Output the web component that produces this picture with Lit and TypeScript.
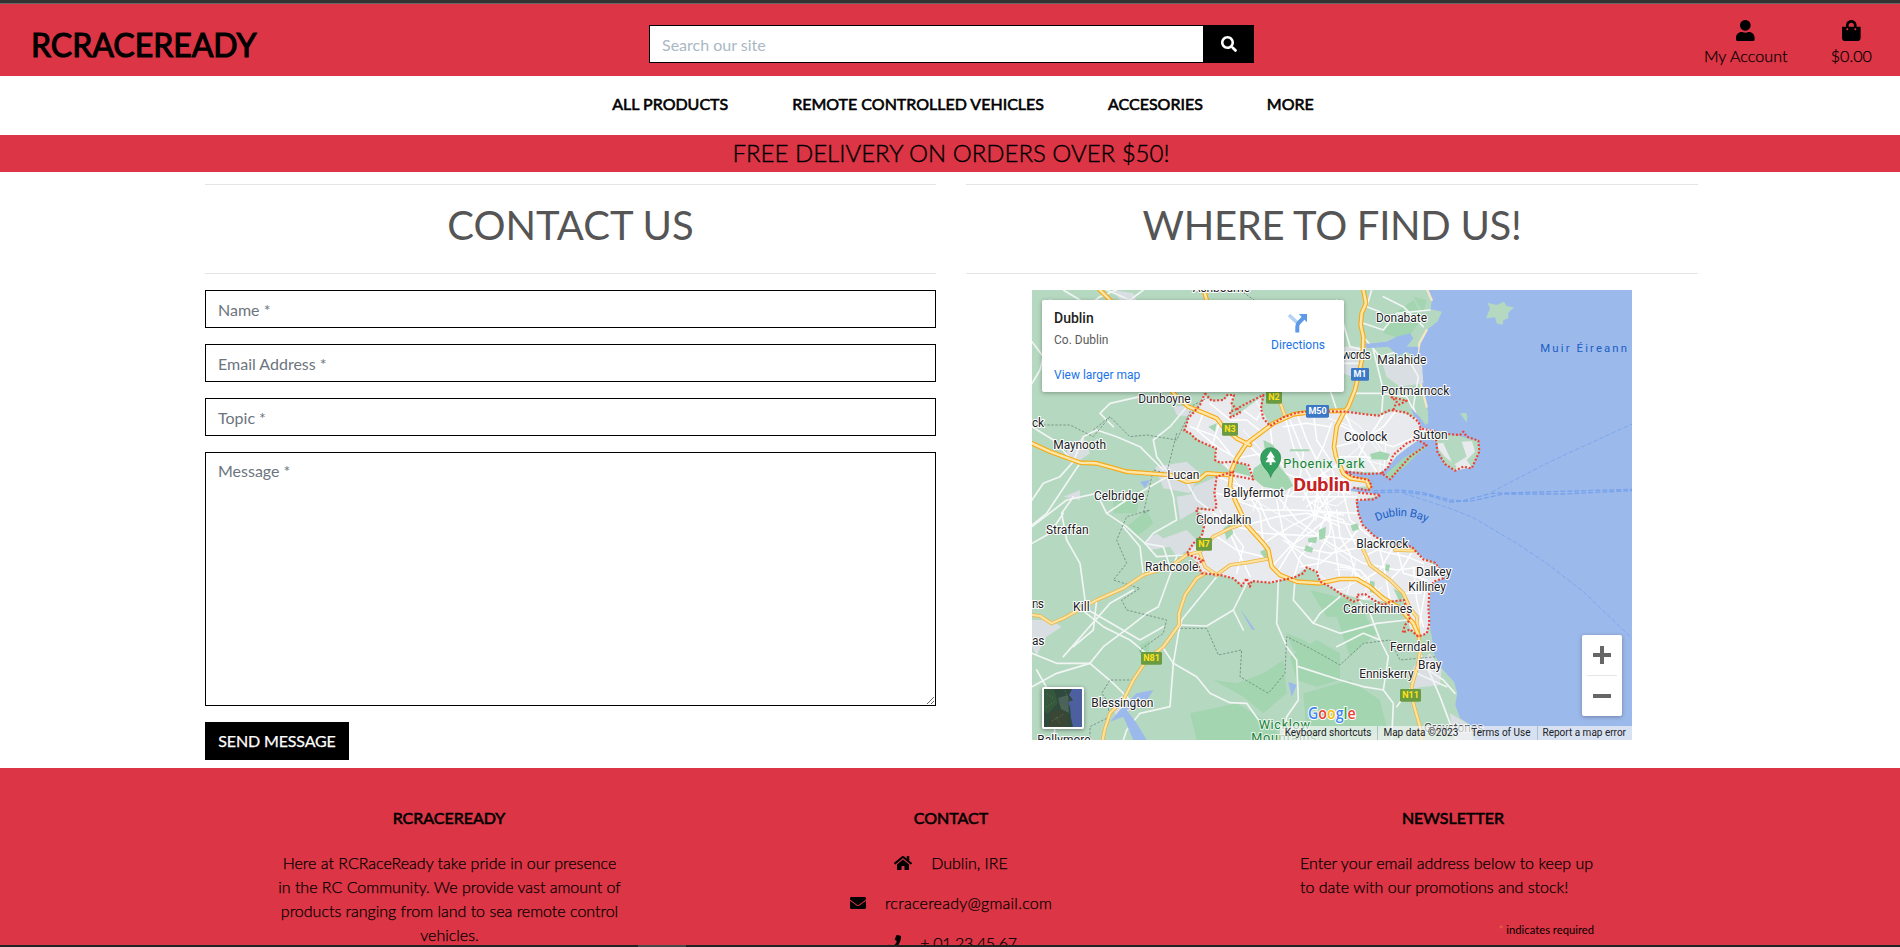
import { LitElement, html, svg, css } from "lit";
import { customElement, property } from "lit/decorators.js";

const ICONS: Record<string, { w: number; d: string }> = {
  user: { w: 448, d: "M224 256c70.7 0 128-57.3 128-128S294.7 0 224 0 96 57.3 96 128s57.3 128 128 128zm89.6 32h-16.7c-22.2 10.2-46.9 16-72.9 16s-50.6-5.8-72.9-16h-16.7C60.2 288 0 348.2 0 422.4V464c0 26.5 21.5 48 48 48h352c26.5 0 48-21.5 48-48v-41.6c0-74.2-60.2-134.4-134.4-134.4z" },
  bag: { w: 448, d: "M352 160v-32C352 57.42 294.579 0 224 0 153.42 0 96 57.42 96 128v32H0v272c0 44.183 35.817 80 80 80h288c44.183 0 80-35.817 80-80V160h-96zm-192-32c0-35.29 28.71-64 64-64s64 28.71 64 64v32H160v-32zm160 120c-13.255 0-24-10.745-24-24s10.745-24 24-24 24 10.745 24 24-10.745 24-24 24zm-192 0c-13.255 0-24-10.745-24-24s10.745-24 24-24 24 10.745 24 24-10.745 24-24 24z" },
  search: { w: 512, d: "M505 442.7L405.3 343c-4.5-4.5-10.6-7-17-7H372c27.6-35.3 44-79.7 44-128C416 93.1 322.9 0 208 0S0 93.1 0 208s93.1 208 208 208c48.3 0 92.7-16.4 128-44v16.3c0 6.4 2.5 12.5 7 17l99.7 99.7c9.4 9.4 24.6 9.4 33.9 0l28.3-28.3c9.4-9.4 9.4-24.6.1-34zM208 336c-70.7 0-128-57.2-128-128 0-70.7 57.2-128 128-128 70.7 0 128 57.2 128 128 0 70.7-57.2 128-128 128z" },
  home: { w: 576, d: "M280.37 148.26L96 300.11V464a16 16 0 0 0 16 16l112.06-.29a16 16 0 0 0 15.92-16V368a16 16 0 0 1 16-16h64a16 16 0 0 1 16 16v95.64a16 16 0 0 0 16 16.05L464 480a16 16 0 0 0 16-16V300L295.67 148.26a12.19 12.19 0 0 0-15.3 0zM571.6 251.47L488 182.56V44.05a12 12 0 0 0-12-12h-56a12 12 0 0 0-12 12v72.61L318.47 43a48 48 0 0 0-61 0L4.34 251.47a12 12 0 0 0-1.6 16.9l25.5 31A12 12 0 0 0 45.15 301l235.22-193.74a12.19 12.19 0 0 1 15.3 0L530.9 301a12 12 0 0 0 16.9-1.6l25.5-31a12 12 0 0 0-1.7-16.93z" },
  envelope: { w: 512, d: "M502.3 190.8c3.9-3.1 9.7-.2 9.7 4.7V400c0 26.5-21.5 48-48 48H48c-26.5 0-48-21.5-48-48V195.6c0-5 5.7-7.8 9.7-4.7 22.4 17.4 52.1 39.5 154.1 113.6 21.1 15.4 56.7 47.8 92.2 47.6 35.7.3 72-32.8 92.3-47.6 102-74.1 131.6-96.3 154-113.7zM256 320c23.2.4 56.6-29.2 73.4-41.4 132.7-96.3 142.8-104.7 173.4-128.7 5.8-4.5 9.2-11.5 9.2-18.9v-19c0-26.5-21.5-48-48-48H48c-26.5 0-48 21.5-48 48v19c0 7.4 3.4 14.3 9.2 18.9 30.6 23.9 40.7 32.4 173.4 128.7 16.8 12.2 50.2 41.8 73.4 41.4z" },
  phone: { w: 512, d: "M493.4 24.6l-104-24c-11.3-2.6-22.9 3.3-27.5 13.9l-48 112c-4.2 9.8-1.4 21.3 6.9 28l60.6 49.6c-36 76.7-98.9 140.5-177.2 177.2l-49.6-60.6c-6.8-8.3-18.2-11.1-28-6.9l-112 48C3.9 366.5-2 378.1.6 389.4l24 104C27.1 504.2 36.7 512 48 512c256.1 0 464-207.5 464-464 0-11.2-7.7-20.9-18.6-23.4z" },
};

@customElement("fa-icon")
class FaIcon extends LitElement {
  @property() name = "user";
  static styles = css`
    :host { display: inline-block; line-height: 0; vertical-align: -0.125em; }
    svg { height: 1em; display: block; fill: currentColor; }
  `;
  render() {
    const i = ICONS[this.name];
    return html`<svg viewBox="0 0 ${i.w} 512"><path d=${i.d}></path></svg>`;
  }
}

/* Map geometry, in thirds of a pixel */
const COAST =
  "M6 30H1190L1205 60L1202 88L1236 95L1222 125L1190 150L1168 190L1160 240L1172 262L1176 320L1184 350L1194 395L1195 430L1186 434L1172 415L1150 390L1143 385L1158 425L1168 443L1195 452L1225 458L1290 468L1322 478L1345 482L1347 515L1325 562L1300 562L1275 572L1245 550L1228 520L1220 485L1205 478L1165 480L1130 505L1100 528L1075 560L1050 578L1010 582L945 572L940 580L975 588L1012 600L1026 618L1010 628L970 622L955 632L1010 640L1052 645L1030 656L985 662L976 665L985 700L998 735L1035 770L1075 790L1140 800L1160 815L1180 835L1210 845L1225 862L1240 895L1215 905L1202 930L1197 980L1200 1040L1208 1085L1212 1120L1235 1165L1272 1205L1282 1240L1276 1275L1290 1315L1315 1330L1335 1380H6Z";
const CITY =
  "M520 345L545 362L580 360L600 345L612 350L604 380L600 412L630 398L695 350L693 385L718 435L760 412L850 395L930 388L1000 402L1045 407L1100 390L1160 415L1172 440L1225 458L1205 478L1165 480L1130 505L1100 528L1075 560L1050 578L945 572L940 580L975 588L1012 600L1026 618L970 622L955 632L1052 645L985 662L976 665L985 700L998 735L1035 770L1075 790L1140 800L1180 835L1225 862L1240 895L1215 905L1202 930L1197 980L1200 1040L1190 1060L1165 1070L1140 1045L1130 1010L1120 955L1075 965L1000 960L935 940L900 920L870 905L860 875L830 862L790 893L720 908L665 903L640 915L610 895L570 885L520 882L500 845L470 822L500 780L522 760L515 700L500 690L553 690L560 590L610 580L570 548L555 540L558 505L520 490L480 460L465 450L475 415L510 375Z";
const BOUNDARY =
  "M525 340L545 362L580 360L592 345L612 345L605 370L618 388L600 395L602 412L630 398L622 385L660 365L700 345L693 385L700 415L720 438L760 412L800 398L850 393L945 395L1000 402L1045 407L1080 390L1130 398L1165 425L1172 445L1250 462L1290 465L1300 455L1310 470L1345 482L1348 515L1325 565L1300 560L1275 572L1245 552L1222 515L1218 480M1172 445L1160 478L1190 495L1140 530L1080 598L1055 580L1075 560L1090 525L1130 490L1165 475M1055 580L1010 582L945 575L970 590L1015 600L1026 618L1015 632L965 622M985 638L1052 645L1030 658L980 660L985 700L998 735L1035 770L1080 795L1145 800L1180 838L1215 848L1230 870L1240 895L1210 905L1198 940L1195 980L1198 1030L1190 1060L1165 1070L1140 1048L1118 1058L1125 1035L1140 1020L1122 960L1080 965L1060 975L1030 960L1005 942L980 945L985 960L970 965L930 940L900 920L870 905L860 875L830 862L820 880L790 893L720 908L665 903L660 920L650 895L635 918L610 895L570 885L515 880L502 850L520 842L470 822L490 790L515 768L522 740L515 710L500 700L500 685L550 690L560 680L553 640L560 590L610 575L600 585L670 598L655 555L610 545L570 548L555 540L558 505L500 480L480 460L463 452L475 415L510 375L525 340M1090 390L1100 365L1085 352L1130 362L1105 375";

const MOTORWAYS = [
  "M6 490L60 515L150 548L200 550L290 575L380 582L420 585L470 605L505 600L530 580L600 585",
  "M210 30L245 65L400 300L435 345L475 380L525 400L560 415L580 440L620 475L660 495",
  "M522 30L535 80",
  "M945 392L850 395L790 403L730 430L690 460L650 490L620 535L605 570L600 620L615 660L650 735L700 790L715 810L725 860L750 885L800 905L870 910L930 897L980 897L1020 920L1060 955L1110 985L1150 1030L1165 1065",
  "M1000 30L1008 70L995 100L992 135L1000 170L998 230L975 330L955 380L940 400L920 440L912 500L918 530L940 580L960 595L1010 602L1018 620",
];
const PRIMARIES = [
  "M735 335L755 380L765 410",
  "M998 805L1020 855L1080 900L1120 940L1140 985L1160 1010L1165 1060L1170 1110L1165 1150L1145 1220L1150 1270L1170 1340L1175 1380",
  "M6 1005L30 1008L65 1030L100 1015L200 960L280 925L340 885L420 860L470 825L510 815L550 770L600 745L630 735",
  "M510 820L525 860L560 885L600 855L650 848L720 835",
  "M525 880L500 895L465 945L447 1000L447 1035L400 1100L350 1140L310 1200L280 1260L240 1300L225 1345L218 1380",
  "M1095 810L1150 812",
];
const STREETS = [
  "M6 185L40 230L30 270L6 310", "M6 440L70 480L130 545L90 590L40 610L6 660", "M60 60L160 90L210 50L260 30", "M100 30L150 60",
  "M250 440L210 400L240 370L330 350", "M130 545L160 470L200 450L260 470L330 500L400 570", "M150 550L110 610L50 700L6 735",
  "M6 740L110 660L200 640L300 650", "M110 780L95 700L130 650", "M110 780L150 850L165 960L165 985L130 1000",
  "M410 585L430 650L440 720L370 760L345 790L380 830L470 825", "M345 790L290 740L230 700L200 640", "M470 605L500 660L540 690",
  "M420 585L380 530L370 480L420 440L470 380", "M420 585L360 620L290 660L230 700", "M6 1120L80 1150L180 1150L250 1210L300 1260",
  "M180 1150L220 1100L300 1040L350 1000L385 980L440 830", "M20 1170L60 1240L80 1310L70 1380", "M6 1220L80 1180L180 1150",
  "M150 985L220 1040L300 1080L360 1130", "M165 985L210 1010L330 1080L400 1040", "M100 1130L240 970L310 930", "M447 1035L530 1038L610 990L650 910",
  "M400 1105L430 1150L500 1190L540 1240L600 1268L650 1270L700 1340", "M430 1150L420 1280L330 1300L290 1350L280 1380", "M430 1150L445 1060L455 1020L520 940L560 890",
  "M745 900L740 1030L770 1100L800 1140L805 1260L770 1310L760 1380", "M795 900L790 960L850 1030L930 1060L1040 1030L1130 1020",
  "M920 1100L1000 1060L1050 1080L1075 1130L1060 1230L1090 1270L1085 1380", "M805 1160L930 1200L1000 1220L1060 1230", "M1165 1110L1200 1180L1230 1250L1260 1330L1280 1380",
  "M985 960L1020 1000L1050 1080", "M1145 1220L1100 1280", "M1000 170L1050 230L1120 210L1165 290L1150 380L1170 440", "M1000 130L1060 150L1100 100L1200 90",
  "M1060 50L1120 80L1180 140", "M970 340L1050 340L1130 350L1160 410", "M1025 30L1010 80L1050 95", "M998 250L940 250L915 200L900 130", "M900 330L920 390L990 440L1050 520L1050 580",
  "M920 60L960 200L1000 210", "M1030 210L1060 330L1055 400", "M340 885L330 800L280 740", "M420 860L400 800L345 790", "M200 960L190 1050L130 1100",
  "M6 790L60 760L100 700", "M230 30L300 60L340 30", "M640 1050L610 990", "M930 950L870 1000L850 1030", "M1180 1160L1240 1200L1275 1240", "M1160 1180L1250 1220",
];
const CITY_STREETS = [
  "M765 410L790 500L840 590L880 680", "M620 535L700 520L800 560L930 560", "M650 490L720 560L860 620L960 640", "M720 435L730 520L760 560", "M800 400L830 480L870 560L900 640",
  "M850 395L860 480L900 540L920 620", "M600 620L700 640L800 650L980 650", "M615 660L700 690L800 690L980 700", "M650 735L740 710L830 700L985 740", "M700 790L780 740L860 700L900 640",
  "M725 860L780 800L850 750L910 700", "M790 900L810 830L860 770L890 700", "M860 880L870 810L900 760L900 700", "M930 900L920 830L910 760L890 680", "M980 897L960 820L930 770L920 690",
  "M740 660L760 760L800 830L850 900", "M680 650L720 740L800 800L900 820L1000 800", "M720 620L800 720L900 790L1000 850L1100 870L1180 860", "M600 745L640 800L620 880", "M560 770L620 810L700 830",
  "M550 700L620 740L700 760L900 770L1050 790", "M560 590L640 620L690 700L700 790", "M920 430L1000 470L1090 500L1160 470", "M915 500L1000 480L1060 440L1100 390", "M918 530L1000 530L1080 540",
  "M945 400L990 500L1040 575", "M960 590L1000 500L1060 405", "M900 440L830 430L760 440", "M850 560L880 500L905 430", "M1040 775L1060 850L1080 960", "M1100 800L1120 880L1190 900L1165 1060",
  "M1000 830L1040 810L1130 830L1180 850", "M1080 900L1120 860L1150 810", "M1120 940L1170 940L1200 910", "M1150 860L1160 960L1180 1040", "M1000 900L1050 870L1090 800", "M930 860L990 870L1060 950",
  "M520 400L500 450L560 500L620 535", "M540 370L600 420L650 420L700 460", "M480 440L560 470L600 520", "M640 390L680 420L700 380", "M570 420L540 520", "M860 640L850 720L800 780L740 880",
  "M880 580L940 640L960 720L1020 770", "M800 590L830 650L850 700L930 740", "M780 650L820 600L880 590L960 600", "M890 700L940 720L980 800", "M570 690L600 760L660 890", "M560 640L640 660L740 650",
  "M760 780L830 830L960 860L1020 920", "M810 860L870 850L960 780L990 740", "M740 560L780 620L760 690", "M780 420L820 520L810 590", "M910 560L850 600L820 660",
];
const PARKS = [
  "M665 590L672 565L700 545L745 555L775 590L790 618L765 632L700 620Z", "M700 480L730 495L738 515L705 512Z", "M835 775L862 770L858 790L834 786Z", "M866 750L888 740L885 775L868 780Z",
  "M1020 522L1050 514L1080 522L1072 540L1025 538Z", "M962 736L982 730L988 748L968 754Z", "M1020 902L1034 905L1033 940L1020 936Z", "M1090 925L1115 940L1130 965L1105 958Z", "M535 440L560 430L555 455Z", "M580 745L600 730L610 760L590 780Z", "M828 795L850 805L845 818L822 812Z",
  "M722 1150L745 1110L722 1140Z", "M780 508L838 508L838 514L780 514Z", "M690 815L720 800L722 840L705 838Z", "M610 545L650 555L665 590L610 575Z", "M1068 852L1080 855L1076 875L1065 870Z",
];
const SHADES = [
  ["#a3d5b1", "M780 1130L860 1080L930 1120V1200L860 1220L800 1200Z"], ["#a3d5b1", "M550 1200L620 1210L700 1180L760 1140L770 1240L700 1300L640 1250Z"], ["#a3d5b1", "M480 1300L620 1270L720 1330L760 1380H500Z"],
  ["#a3d5b1", "M820 1240L960 1200L1050 1260L1070 1340L1000 1380H830Z"], ["#a3d5b1", "M920 1010L1000 1000L1040 1060L960 1130Z"], ["#a3d5b1", "M840 930L960 960L1010 1010L890 1010Z"], ["#a3d5b1", "M770 1060L820 1080L900 1130L920 1160L840 1140L790 1110Z"],
  ["#a3d5b1", "M170 90L300 70L340 110L220 150Z"], ["#a3d5b1", "M250 660L330 630L320 700L250 700Z"], ["#a3d5b1", "M1080 110L1150 60L1180 110L1130 180L1060 160Z"],
  ["#a3d5b1", "M1150 50L1190 60L1180 100Z"], ["#a3d5b1", "M290 740L350 690L370 730L320 770Z"], ["#a3d5b1", "M320 1100L360 1080L350 1160Z"],
  ["#d9dee2", "M110 510L160 470L180 520L150 540L115 545Z"], ["#d9dee2", "M375 560L470 545L510 580L480 640L400 625Z"], ["#d9dee2", "M430 380L490 375L480 410L440 405Z"], ["#d9dee2", "M350 780L380 760L400 775L470 750L510 790L440 830L420 800L360 810Z"],
  ["#d9dee2", "M6 1020L60 1020L95 1040L50 1070L20 1125L6 1100Z"], ["#d9dee2", "M1150 1160L1200 1120L1235 1170L1230 1215L1150 1225Z"], ["#d9dee2", "M490 620L560 590L555 690L480 680Z"],
  ["#d9dee2", "M930 200L990 200L990 300L940 280Z"], ["#d9dee2", "M1050 230L1175 240L1180 310L1110 320L1070 290Z"], ["#d9dee2", "M240 1270L290 1240L300 1290L260 1310Z"],
  ["#d9dee2", "M100 650L150 630L150 660Z"], ["#d9dee2", "M250 30L310 40L330 90L270 60Z"], ["#d9dee2", "M440 650L500 640L500 690L450 720Z"], ["#d9dee2", "M1260 1300L1310 1330L1330 1380H1270Z"],
  ["#b5d8c0", "M1240 490L1290 470L1310 530L1270 555Z"], ["#a3d5b1", "M1160 525L1190 500L1178 500L1120 535L1065 585L1080 598L1130 555Z"],
];
const WATERS = [
  "M1005 192L1070 185L1100 170L1140 160L1150 175L1130 200L1165 200L1162 235L1130 215L1105 228L1075 200L1010 205Z",
  "M320 1240L370 1230L345 1270L290 1290L320 1330L350 1380L310 1380L280 1310L240 1325L270 1290Z", "M330 605L360 600L345 625Z", "M630 985L675 1050L665 1048Z", "M775 1205L800 1215L785 1250Z",
];
const DASHES = [
  "M40 435L120 435L190 470L240 410L300 470L350 465L440 480L490 375L540 350", "M190 450L240 410", "M440 460L410 580L370 570L340 700L360 690L290 710L260 780L290 850L250 900L330 925L275 960L290 990L410 1020L400 1060L330 1110L340 1140",
  "M440 1045L530 1045L565 1125L635 1110L630 1190L715 1240L765 1180L770 1070L850 1110L930 1155L1000 1090L1080 1080L1110 1140L1220 1130", "M310 1200L240 1200L215 1240L230 1260L240 1310L180 1340V1380", "M630 30L700 80",
];

const TOWNS: [string, number, number, number][] = [
  ["Ashbourne", 488, 36, 172], ["Dunboyne", 325, 370, 157], ["Maynooth", 70, 508, 158], ["Lucan", 412, 598, 96], ["Celbridge", 192, 660, 151], ["Ballyfermot", 580, 651, 182],
  ["Straffan", 48, 762, 128], ["Clondalkin", 498, 732, 166], ["Rathcoole", 345, 873, 160], ["Kill", 129, 993, 50], ["Blessington", 184, 1281, 186], ["ck", 6, 440, 36],
  ["ns", 6, 984, 36], ["as", 6, 1094, 37], ["Ballymore", 22, 1391, 160], ["Donabate", 1038, 126, 153], ["words", 936, 237, 86], ["Malahide", 1042, 251, 147], ["Portmarnock", 1053, 345, 205],
  ["Coolock", 942, 483, 130], ["Sutton", 1149, 477, 104], ["Blackrock", 979, 804, 156], ["Dalkey", 1158, 888, 106], ["Killiney", 1135, 933, 113], ["Carrickmines", 939, 999, 208],
  ["Ferndale", 1080, 1113, 138], ["Bray", 1164, 1167, 70], ["Enniskerry", 988, 1194, 163],
];
const SHIELDS: [string, number, number, number, boolean][] = [
  ["N2", 708, 333, 48, false], ["N3", 576, 429, 48, false], ["M50", 828, 375, 69, true], ["M1", 963, 264, 54, true], ["N7", 498, 774, 48, false], ["N81", 333, 1116, 63, false], ["N11", 1110, 1227, 63, false],
];

@customElement("dublin-map")
class DublinMap extends LitElement {
  static styles = css`
    :host { display: block; position: relative; width: 600px; height: 450px; overflow: hidden; font-family: Roboto, sans-serif; font-weight: 400; }
    .canvas { display: block; width: 600px; height: 450px; }
    .canvas path { stroke-linejoin: round; stroke-linecap: round; }
    .town { font-size: 36px; fill: #202124; stroke: #fff; stroke-width: 6px; paint-order: stroke; stroke-linejoin: round; }
    .park { font-size: 38px; fill: #188038; stroke: #e9f5ec; stroke-width: 6px; paint-order: stroke; }
    .capital { font-size: 54px; font-weight: 700; fill: #c5221f; stroke: #fff; stroke-width: 7px; paint-order: stroke; }
    .sea { font-size: 34px; fill: #1a5fc4; }
    .shield { font-size: 27px; font-weight: 700; text-anchor: middle; }
    .google { font-family: "Open Sans", sans-serif; font-size: 47px; font-weight: 600; stroke: #fff; stroke-width: 6px; paint-order: stroke; }
    .canvas path.dots { stroke-linecap: butt; }
    .canvas path.dashes { stroke-linecap: butt; }
    .card { position: absolute; left: 10px; top: 10px; width: 302px; height: 92px; box-sizing: border-box; padding: 9px 12px; background: #fff; border-radius: 2px; box-shadow: 0 1px 4px rgba(0,0,0,.3); display: flex; justify-content: space-between; font-size: 12px; }
    .place { display: flex; flex-direction: column; }
    .name { font-size: 14px; line-height: 18px; font-weight: 500; color: #222; }
    .addr { line-height: 16px; margin-top: 5px; color: #5b5b5b; }
    .link { color: #1a73e8; line-height: 16px; }
    .larger { margin-top: 19px; }
    .dir { display: flex; flex-direction: column; align-items: center; padding: 4px 7px 0 0; gap: 4px; }
    .thumb { position: absolute; left: 10px; top: 397px; width: 38px; height: 38px; border: 2px solid #fff; border-radius: 2px; box-shadow: 0 1px 4px rgba(0,0,0,.4); overflow: hidden; }
    .thumb svg { display: block; }
    .zoom { position: absolute; right: 10px; top: 345px; width: 40px; height: 81px; background: #fff; border-radius: 2px; box-shadow: 0 1px 4px rgba(0,0,0,.3); }
    .zoom svg { display: block; }
    .legal { position: absolute; right: 0; bottom: 0; height: 14px; display: flex; font-size: 10px; line-height: 14px; color: #202124; background: rgba(245,245,245,.68); }
    .legal span { padding: 0 6px 0 5px; border-left: 1px solid rgba(120,150,170,.45); white-space: nowrap; }
    .legal span:first-child { border-left: 0; }
    .legal .data { padding-right: 8px; }
    .legal .terms { border-left: 0; }
  `;
  render() {
    const line = (d: string, c: string, w: number) => svg`<path d=${d} fill="none" stroke=${c} stroke-width=${w}></path>`;
    return html`
      <svg class="canvas" viewBox="6 30 1800 1350">
        <defs>
          <clipPath id="land"><path d=${COAST}></path></clipPath>
          <clipPath id="city"><path d=${CITY}></path></clipPath>
          <path id="bay" d="M1040 724Q1115 690 1192 728"></path>
        </defs>
        <rect x="6" y="30" width="1800" height="1350" fill="#9cb9eb"></rect>
        <path d=${COAST} fill="#b5d8c0"></path>
        <path d="M1192 30L1205 60M1190 150L1168 190L1160 240M1172 310L1190 380" stroke="#f5e6c4" stroke-width="7" fill="none"></path>
        <path d=${CITY} fill="#e8eaed"></path>
        <path d="M1222 490L1345 482L1347 515L1325 562L1275 572L1230 525Z" fill="#e8eaed"></path>
        <path d="M1325 480L1345 482L1347 515L1325 562L1310 540L1335 515Z" fill="#b5d8c0"></path>
        <path d="M1220 500L1240 550L1275 572L1280 558L1245 530Z" fill="#b5d8c0"></path>
        ${SHADES.map(([c, d]) => svg`<path d=${d} fill=${c}></path>`)}
        <g clip-path="url(#land)">${STREETS.map((d) => line(d, "#f1f5f4", 5))}</g>
        <g clip-path="url(#city)">
          ${CITY_STREETS.map((d) => line(d, "#fff", 4.5))}
          <g transform="rotate(28 880 680)">${CITY_STREETS.slice(20, 42).map((d) => line(d, "#fff", 2.5))}</g>
          ${PARKS.map((d) => svg`<path d=${d} fill="#a3d5b1"></path>`)}
          <g transform="translate(890 670)">${[0, 45, 90, 135].map((a) => svg`<path transform="rotate(${a})" d="M-60 12L-40 -10L30 8L60 -14M-50 34L0 25L50 36" fill="none" stroke="#fff" stroke-width="3"></path>`)}</g>
        </g>
        ${WATERS.map((d) => svg`<path d=${d} fill="#9cb9eb"></path>`)}
        <path d="M1368 115L1380 85L1372 68L1400 75L1422 65L1430 78L1452 82L1435 98L1435 115L1420 120L1418 135L1400 130L1395 112Z" fill="#b5d8c0"></path>
        <path d="M1290 400L1308 398L1312 408L1310 428Z" fill="#b5d8c0"></path>
        ${DASHES.map((d) => svg`<path class="dashes" d=${d} fill="none" stroke="#7c9589" stroke-width="3" stroke-dasharray="7 5"></path>`)}
        ${PRIMARIES.map((d) => line(d, "#efb43e", 11))} ${PRIMARIES.map((d) => line(d, "#fce3a2", 6.5))}
        ${MOTORWAYS.map((d) => line(d, "#f7a912", 14))} ${MOTORWAYS.map((d) => line(d, "#fde6a8", 7.5))}
        <g fill="none" stroke="#76a3ec">
          <path class="dashes" stroke-width="4" stroke-dasharray="15 6" d="M1030 632L1110 630L1180 638L1260 660L1300 662L1385 640L1806 628M1030 638L1120 636L1190 645L1260 666L1330 662L1420 642L1600 642L1806 632"></path>
          <path class="dashes" stroke-width="2.5" stroke-dasharray="14 6" d="M1385 636L1560 545L1806 432M1120 640L1260 685L1330 713L1460 790L1550 850L1660 935L1806 1075"></path>
        </g>
        <path class="dots" d=${BOUNDARY} fill="none" stroke="#ea4335" stroke-width="6.5" stroke-dasharray="6 5.5"></path>
        ${SHIELDS.map(([t, x, y, w, m]) => svg`<rect x=${x} y=${y} width=${w} height="38" rx="4" fill=${m ? "#3c78c8" : "#6a9b41"}></rect>
          <text class="shield" x=${x + w / 2} y=${y + 28} fill=${m ? "#fff" : "#ffe11a"}>${t}</text>`)}
        ${TOWNS.map(([t, x, y, w]) => svg`<text class="town" x=${x} y=${y} textLength=${w}>${t}</text>`)}
        <path d="M722 591C716 570 692 560 692 533A30 30 0 0 1 752 533C752 560 728 570 722 591Z" fill="#34a160" stroke="#238146" stroke-width="2"></path>
        <path d="M722 513L709 533H715L706 547H719V555H725V547H738L729 533H735Z" fill="#fff"></path>
        <text class="park" x="760" y="563" textLength="244">Phoenix Park</text>
        <text class="capital" x="790" y="632" textLength="170" lengthAdjust="spacingAndGlyphs">Dublin</text>
        <text class="park" x="686" y="1346" textLength="154">Wicklow</text>
        <text class="park" x="664" y="1387" textLength="196">Mountains</text>
        <text class="sea" x="1531" y="216" textLength="260">Muir Éireann</text>
        <text class="sea"><textPath href="#bay" textLength="155">Dublin Bay</textPath></text>
        <text class="town" x="1182" y="1357" textLength="178" opacity=".75">Greystones</text>
        <text class="google" x="834" y="1316" textLength="143" lengthAdjust="spacingAndGlyphs"><tspan fill="#4285f4">G</tspan><tspan fill="#ea4335">o</tspan><tspan fill="#fbbc04">o</tspan><tspan fill="#4285f4">g</tspan><tspan fill="#34a853">l</tspan><tspan fill="#ea4335">e</tspan></text>
      </svg>
      <div class="card">
        <div class="place"><span class="name">Dublin</span><span class="addr">Co. Dublin</span><span class="link larger">View larger map</span></div>
        <div class="dir">
          <svg width="20" height="20" viewBox="0 0 20 20"><path d="M1 2L10 10.500" stroke="#b5d1f6" stroke-width="3.600" fill="none"></path><path d="M9.300 19.500V13.500Q9.300 11 11.200 9.200L15.500 4.800" stroke="#5c9ae8" stroke-width="4" fill="none"></path><path d="M10.800 1H19V9.200Z" fill="#5c9ae8"></path></svg>
          <span class="link">Directions</span>
        </div>
      </div>
      <div class="thumb">
        <svg width="38" height="38" viewBox="0 0 38 38"><rect width="38" height="38" fill="#2f4a3c"></rect><path d="M0 0H10L14 14L4 25L0 22Z" fill="#35583c"></path><path d="M6 24L18 20L25 28L22 38H5Z" fill="#3a4735"></path><path d="M14 9L24 6L25 24L17 20Z" fill="#4b6259"></path><path d="M28 0H38V38H29L27 29L26 18L24 13L29 11L25 6Z" fill="#4c5f9e"></path><path d="M3 5L9 9M2 18L12 12M8 32L20 25M16 15L23 20M21 2L25 11M12 28L16 35" stroke="#6a7b66" stroke-width=".8" stroke-dasharray="1 2"></path></svg>
      </div>
      <div class="zoom">
        <svg width="40" height="81" viewBox="0 0 40 81"><path d="M11 20H29M20 11V29M11 61H29" stroke="#666" stroke-width="4"></path><path d="M5 40.500H35" stroke="#e6e6e6"></path></svg>
      </div>
      <div class="legal"><span>Keyboard shortcuts</span><span class="data">Map data ©2023</span><span class="terms">Terms of Use</span><span>Report a map error</span></div>
    `;
  }
}

@customElement("app-root")
class AppRoot extends LitElement {
  static styles = css`
    :host { display: flex; flex-direction: column; height: 947px; overflow: hidden; background: #fff; color: #000; font-family: Lato, sans-serif; font-size: 16px; line-height: 24px; font-weight: 300; -webkit-text-stroke: 0.25px currentColor; }
    dublin-map, input, textarea, h2 { -webkit-text-stroke: 0; }
    .edge { height: 3px; background: #333; border-bottom: 1px solid #6b6666; flex: none; }
    header { height: 72px; flex: none; background: #dc3545; display: grid; grid-template-columns: 1fr 605px 1fr; align-items: center; padding: 0 28px 0 31px; }
    .logo { font-size: 32px; font-weight: 400; -webkit-text-stroke: 1.1px #000; line-height: 38px; padding-top: 9px; }
    .search { display: flex; height: 38px; margin-top: 8px; }
    input, textarea { box-sizing: border-box; display: block; width: 100%; border: 1px solid #000; border-radius: 0; padding: 6px 12px; font: 400 16px/24px Lato, sans-serif; background: #fff; height: 38px; margin: 0; outline: 0; }
    input::placeholder, textarea::placeholder { color: #6c757d; opacity: 1; }
    .search input::placeholder { color: #aab7c4; }
    .go { width: 50px; flex: none; background: #000; color: #fff; display: flex; align-items: center; justify-content: center; }
    .tools { justify-self: end; display: flex; gap: 43px; text-align: center; padding-top: 8px; }
    .tool { display: flex; flex-direction: column; align-items: center; }
    .tool span { letter-spacing: .1px; }
    .tool fa-icon { font-size: 21.3px; margin-bottom: 3px; }
    nav { height: 59px; flex: none; display: flex; justify-content: center; gap: 64px; padding: 16px 0 0 26px; box-sizing: border-box; font-weight: 400; -webkit-text-stroke: .6px #000; }
    .banner { height: 37px; flex: none; background: #dc3545; text-align: center; font-size: 24px; line-height: 36px; padding-left: 2px; -webkit-text-stroke: .4px #000; }
    main { height: 596px; flex: none; box-sizing: border-box; width: 1493px; margin-left: 205px; display: grid; grid-template-columns: 731px 732px; gap: 30px; padding-top: 12px; }
    h2 { margin: 0; height: 88px; border-top: 1px solid #e5e5e5; border-bottom: 1px solid #e5e5e5; color: #555; text-align: center; font-weight: 400; font-size: 40px; line-height: 80px; }
    .find { letter-spacing: -.28px; }
    form { margin-top: 16px; display: flex; flex-direction: column; gap: 16px; align-items: flex-start; }
    textarea { height: 254px; resize: vertical; }
    .send { width: 144px; height: 38px; background: #000; color: #fff; border: 0; padding: 0; font: 400 16px/24px Lato, sans-serif; letter-spacing: -.15px; }
    dublin-map { margin: 16px auto 0; }
    footer { flex: none; height: 177px; overflow: hidden; box-sizing: border-box; background: #dc3545; padding: 38px 198px 0; display: grid; grid-template-columns: repeat(3, 502px); text-align: center; }
    h6 { margin: 0 0 21px; font-size: 16px; line-height: 24px; font-weight: 400; -webkit-text-stroke: .6px #000; }
    .about { width: 350px; margin: 0 auto; padding-left: 1px; }
    .row { display: flex; justify-content: center; align-items: center; height: 24px; margin-bottom: 16px; }
    .row fa-icon { margin-right: 19px; }
    .email { letter-spacing: .25px; }
    .tel { letter-spacing: -.35px; }
    .news { width: 294px; margin: 0 auto; text-align: left; position: relative; left: -6px; letter-spacing: .02px; white-space: nowrap; }
    .req { font-size: 11.2px; text-align: right; margin-top: 19px; font-weight: 400; line-height: 24px; -webkit-text-stroke: 0; }
    .req b { color: #f0693f; font-weight: 400; }
    .taskbar { height: 2px; flex: none; background: #222; padding-left: 638px; }
    .taskbar i { display: block; height: 2px; width: 48px; background: #484848; }
  `;
  render() {
    return html`
      <div class="edge"></div>
      <header>
        <div class="logo">RCRACEREADY</div>
        <div class="search"><input placeholder="Search our site" /><div class="go"><fa-icon name="search"></fa-icon></div></div>
        <div class="tools">
          <div class="tool"><fa-icon name="user"></fa-icon><span>My Account</span></div>
          <div class="tool"><fa-icon name="bag"></fa-icon><span>$0.00</span></div>
        </div>
      </header>
      <nav>${["ALL PRODUCTS", "REMOTE CONTROLLED VEHICLES", "ACCESORIES", "MORE"].map((t) => html`<span>${t}</span>`)}</nav>
      <div class="banner">FREE DELIVERY ON ORDERS OVER $50!</div>
      <main>
        <section>
          <h2>CONTACT US</h2>
          <form>
            <input placeholder="Name *" /><input placeholder="Email Address *" /><input placeholder="Topic *" />
            <textarea placeholder="Message *"></textarea>
            <button class="send" type="button">SEND MESSAGE</button>
          </form>
        </section>
        <section><h2 class="find">WHERE TO FIND US!</h2><dublin-map></dublin-map></section>
      </main>
      <footer>
        <section><h6>RCRACEREADY</h6><div class="about">Here at RCRaceReady take pride in our presence in the RC Community. We provide vast amount of products ranging from land to sea remote control vehicles.</div></section>
        <section><h6>CONTACT</h6>
          <div class="row"><fa-icon name="home"></fa-icon>Dublin, IRE</div>
          <div class="row email"><fa-icon name="envelope"></fa-icon>rcraceready@gmail.com</div>
          <div class="row tel"><fa-icon name="phone"></fa-icon>+ 01 23 45 67</div>
        </section>
        <section><h6>NEWSLETTER</h6><div class="news">Enter your email address below to keep up<br />to date with our promotions and stock!<div class="req"><b>*</b> indicates required</div></div></section>
      </footer>
      <div class="taskbar"><i></i></div>
    `;
  }
}
